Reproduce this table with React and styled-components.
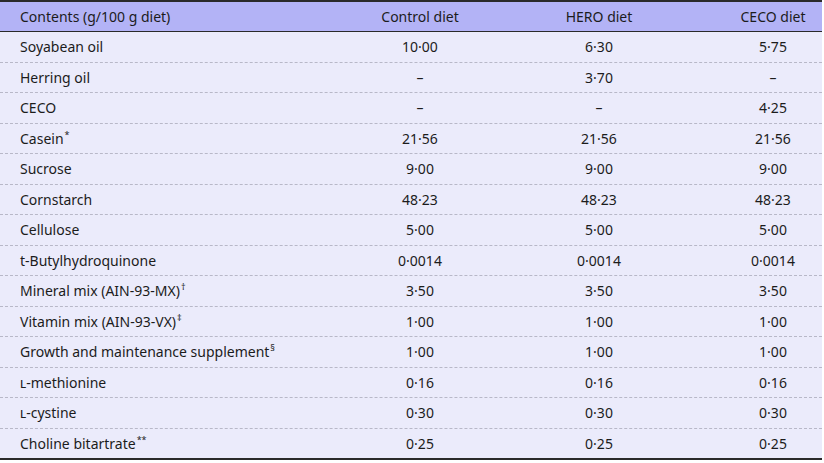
import * as React from "react";
import styled, { createGlobalStyle } from "styled-components";

const rows = [
    { name: "Soyabean oil", values: ["10·00", "6·30", "5·75"] },
    { name: "Herring oil", values: ["–", "3·70", "–"] },
    { name: "CECO", values: ["–", "–", "4·25"] },
    { name: "Casein", note: "*", values: ["21·56", "21·56", "21·56"] },
    { name: "Sucrose", values: ["9·00", "9·00", "9·00"] },
    { name: "Cornstarch", values: ["48·23", "48·23", "48·23"] },
    { name: "Cellulose", values: ["5·00", "5·00", "5·00"] },
    { name: "t-Butylhydroquinone", values: ["0·0014", "0·0014", "0·0014"] },
    { name: "Mineral mix (AIN-93-MX)", note: "†", values: ["3·50", "3·50", "3·50"] },
    { name: "Vitamin mix (AIN-93-VX)", note: "‡", values: ["1·00", "1·00", "1·00"] },
    { name: "Growth and maintenance supplement", note: "§", values: ["1·00", "1·00", "1·00"] },
    { name: "-methionine", prefix: "l", values: ["0·16", "0·16", "0·16"] },
    { name: "-cystine", prefix: "l", values: ["0·30", "0·30", "0·30"] },
    { name: "Choline bitartrate", note: "**", values: ["0·25", "0·25", "0·25"] }
];

const columns = ["Control diet", "HERO diet", "CECO diet"];

export default function App() {
    return (
        <>
            <GlobalStyle/>
            <Table>
                <HeadRow>
                    <Cell>Contents (g/100 g diet)</Cell>
                    {columns.map((c, i) => (
                        <ValueCell key={c} $last={i === columns.length - 1}>{c}</ValueCell>
                    ))}
                </HeadRow>
                {rows.map(({ name, note, prefix, values }, r) => (
                    <BodyRow key={name} $final={r === rows.length - 1}>
                        <Cell>
                            {prefix && <SmallCaps>{prefix}</SmallCaps>}
                            {name}
                            {note && <Note>{note}</Note>}
                        </Cell>
                        {values.map((v, i) => (
                            <ValueCell key={i} $last={i === values.length - 1}>{v}</ValueCell>
                        ))}
                    </BodyRow>
                ))}
            </Table>
        </>
    );
}

const GlobalStyle = createGlobalStyle`
  body {
    margin: 0;
    background: #fff;
    font-family: "Noto Sans", "Liberation Sans", sans-serif;
    font-size: 14px;
    color: #1c1c1c;
  }
`;

const Table = styled.div`
  width: 822px;
  border-top: 2px solid #2a2a2a;
  border-bottom: 2px solid #2a2a2a;
  background: #ebebfb;
`;

const Row = styled.div`
  display: grid;
  grid-template-columns: 333px 174px 184px 1fr;
  align-items: center;
`;

const HeadRow = styled(Row)`
  background: #b3b3f6;
  border-bottom: 1.5px solid #2a2a2a;
  height: 29px;
`;

const BodyRow = styled(Row)`
  border-bottom: ${p => p.$final ? "none" : "1px dashed #b8b8c8"};
`;

const Cell = styled.div`
  padding: 5px 0 5px 20px;
  line-height: 19.5px;
  white-space: nowrap;
`;

const ValueCell = styled.div`
  padding: 5px 0 5px ${p => p.$last ? "33px" : "0"};
  line-height: 19.5px;
  text-align: center;
  white-space: nowrap;
`;

const Note = styled.sup`
  font-size: 9px;
  line-height: 0;
  margin-left: 1px;
`;

const SmallCaps = styled.span`
  font-variant: small-caps;
`;
